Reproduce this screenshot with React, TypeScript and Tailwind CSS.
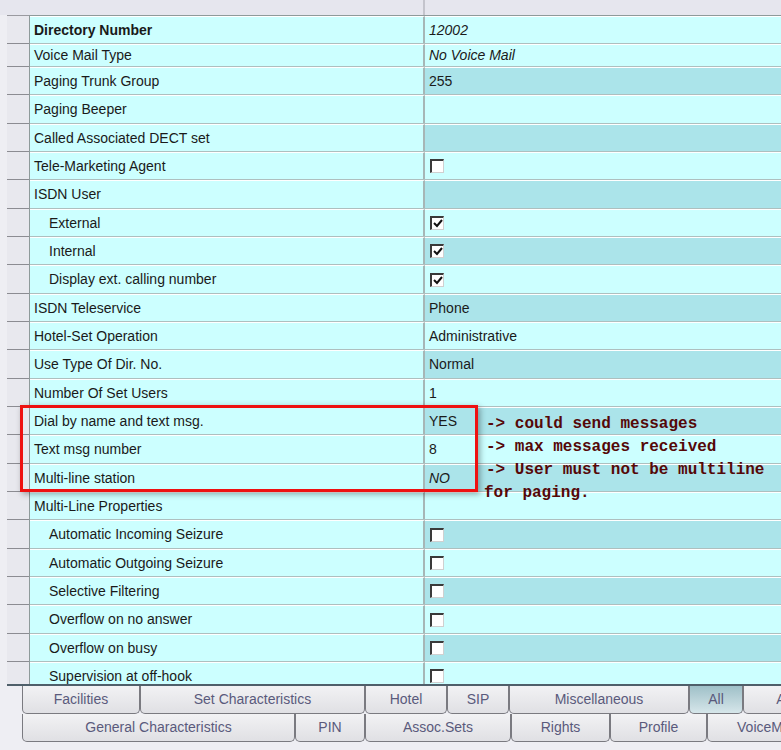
import React from "react";

type Row = {
  label: string;
  value?: string;
  check?: boolean;
  bold?: boolean;
  italic?: boolean;
  indent?: boolean;
  dark?: boolean;
  h: string;
};

const rows: Row[] = [
  { label: "Directory Number", value: "12002", bold: true, italic: true, h: "h-[28px]" },
  { label: "Voice Mail Type", value: "No Voice Mail", italic: true, h: "h-[23px]" },
  { label: "Paging Trunk Group", value: "255", dark: true, h: "h-[28px]" },
  { label: "Paging Beeper", h: "h-[29px]" },
  { label: "Called Associated DECT set", dark: true, h: "h-[28px]" },
  { label: "Tele-Marketing Agent", check: false, h: "h-[28px]" },
  { label: "ISDN User", dark: true, h: "h-[29px]" },
  { label: "External", indent: true, check: true, h: "h-[28px]" },
  { label: "Internal", indent: true, check: true, dark: true, h: "h-[28px]" },
  { label: "Display ext. calling number", indent: true, check: true, h: "h-[29px]" },
  { label: "ISDN Teleservice", value: "Phone", dark: true, h: "h-[28px]" },
  { label: "Hotel-Set Operation", value: "Administrative", h: "h-[28px]" },
  { label: "Use Type Of Dir. No.", value: "Normal", dark: true, h: "h-[29px]" },
  { label: "Number Of Set Users", value: "1", h: "h-[28px]" },
  { label: "Dial by name and text msg.", value: "YES", dark: true, h: "h-[28px]" },
  { label: "Text msg number", value: "8", h: "h-[29px]" },
  { label: "Multi-line station", value: "NO", italic: true, dark: true, h: "h-[28px]" },
  { label: "Multi-Line Properties", h: "h-[28px]" },
  { label: "Automatic Incoming Seizure", indent: true, check: false, dark: true, h: "h-[29px]" },
  { label: "Automatic Outgoing Seizure", indent: true, check: false, h: "h-[28px]" },
  { label: "Selective Filtering", indent: true, check: false, dark: true, h: "h-[28px]" },
  { label: "Overflow on no answer", indent: true, check: false, h: "h-[29px]" },
  { label: "Overflow on busy", indent: true, check: false, dark: true, h: "h-[28px]" },
  { label: "Supervision at off-hook", indent: true, check: false, h: "h-[28px]" },
];

function CheckBox({ checked }: { checked: boolean }) {
  return (
    <div className="w-[14px] h-[14px] bg-white border-t-2 border-l-2 border-t-[#3a3a3a] border-l-[#3a3a3a] border-b border-r border-b-[#d0d0d0] border-r-[#d0d0d0] flex items-center justify-center">
      {checked && (
        <svg width="10" height="9" viewBox="0 0 10 9">
          <path d="M1 4 L4 7 L9 1" stroke="#111" strokeWidth="2" fill="none" />
        </svg>
      )}
    </div>
  );
}

function Tab({ label, w, selected }: { label: string; w: string; selected?: boolean }) {
  return (
    <div
      className={`${w} h-[28px] shrink-0 flex items-center justify-center overflow-hidden whitespace-nowrap border border-t-0 border-[#7a7a80] rounded-b-[5px] text-[14px] text-[#5a5a7c] ${
        selected ? "bg-gradient-to-b from-[#9fc0c8] to-[#d6e6ea]" : "bg-gradient-to-b from-[#f2f2f4] to-[#e0e0e4]"
      }`}
    >
      {label}
    </div>
  );
}

export default function App() {
  return (
    <div
      className="w-[781px] h-[750px] overflow-hidden bg-[#eeeef3] relative"
      style={{ fontFamily: '"Liberation Sans", Arial, sans-serif' }}
    >
      {/* header */}
      <div className="flex h-[15px] bg-[#e6e6ee]">
        <div className="w-[29px]" />
        <div className="w-[396px] border-r-2 border-[#c4c4cc]" />
        <div className="flex-1" />
      </div>
      {/* table */}
      <div className="flex h-[671px] overflow-hidden border-b-2 border-[#4f5f6a] ml-[7px]">
        <div className="w-[22px] shrink-0 flex flex-col bg-[#e8e8ee] border-t border-[#9a9aa0]">
          {rows.map((r, i) => (
            <div key={i} className={`${r.h} shrink-0 border-b border-[#8c8c92]`} />
          ))}
        </div>
        <div className="flex-1 flex flex-col border-l border-t border-[#8e9a9a] text-[14px] text-[#1a1a1a]">
          {rows.map((r, i) => (
            <div key={i} className={`${r.h} shrink-0 flex border-b border-[#aebfbf]`}>
              <div
                className={`w-[395px] shrink-0 bg-[#ccffff] border-t border-white flex items-center border-r-2 border-r-[#a6b6b6] ${
                  r.indent ? "pl-[19px]" : "pl-[4px]"
                } ${r.bold ? "font-bold" : ""}`}
              >
                {r.label}
              </div>
              <div
                className={`flex-1 border-t border-white flex items-center pl-[4px] ${
                  r.dark ? "bg-[#abe4ea]" : "bg-[#ccffff]"
                } ${r.italic ? "italic" : ""}`}
              >
                {r.check !== undefined ? (
                  <div className="ml-[1px]">
                    <CheckBox checked={r.check} />
                  </div>
                ) : (
                  r.value
                )}
              </div>
            </div>
          ))}
        </div>
      </div>
      {/* tabs */}
      <div className="pl-[22px] flex flex-col">
        <div className="flex">
          <Tab label="Facilities" w="w-[118px]" />
          <Tab label="Set Characteristics" w="w-[225px]" />
          <Tab label="Hotel" w="w-[82px]" />
          <Tab label="SIP" w="w-[62px]" />
          <Tab label="Miscellaneous" w="w-[180px]" />
          <Tab label="All" w="w-[54px]" selected />
          <Tab label="Analog" w="w-[110px]" />
        </div>
        <div className="flex">
          <Tab label="General Characteristics" w="w-[273px]" />
          <Tab label="PIN" w="w-[70px]" />
          <Tab label="Assoc.Sets" w="w-[146px]" />
          <Tab label="Rights" w="w-[99px]" />
          <Tab label="Profile" w="w-[97px]" />
          <Tab label="VoiceMail" w="w-[120px]" />
        </div>
      </div>

      {/* red highlight box */}
      <div className="absolute left-[20px] top-[405px] w-[458px] h-[87px] border-[3px] border-[#ee1111] shadow-[2px_2px_6px_rgba(0,0,0,0.35)]" />

      {/* annotations */}
      <div
        className="absolute left-[486px] top-[413px] text-[16px] leading-[23px] font-bold text-[#550808] whitespace-pre"
        style={{ fontFamily: '"Liberation Mono", "Courier New", monospace' }}
      >
        <div>-&gt; could send messages</div>
        <div>-&gt; max messages received</div>
        <div>-&gt; User must not be multiline</div>
        <div className="-ml-[2px]">for paging.</div>
      </div>
    </div>
  );
}
